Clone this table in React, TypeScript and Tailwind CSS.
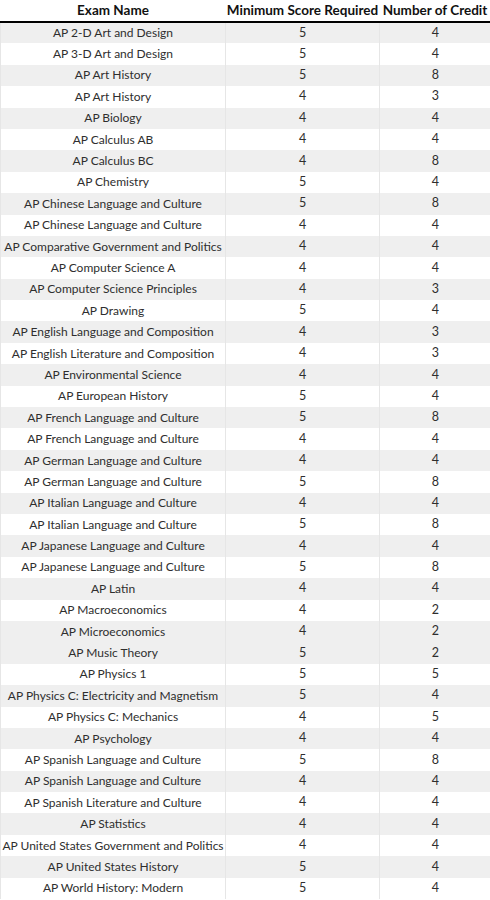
const rows: [string, number, number][] = [
  ["AP 2-D Art and Design", 5, 4],
  ["AP 3-D Art and Design", 5, 4],
  ["AP Art History", 5, 8],
  ["AP Art History", 4, 3],
  ["AP Biology", 4, 4],
  ["AP Calculus AB", 4, 4],
  ["AP Calculus BC", 4, 8],
  ["AP Chemistry", 5, 4],
  ["AP Chinese Language and Culture", 5, 8],
  ["AP Chinese Language and Culture", 4, 4],
  ["AP Comparative Government and Politics", 4, 4],
  ["AP Computer Science A", 4, 4],
  ["AP Computer Science Principles", 4, 3],
  ["AP Drawing", 5, 4],
  ["AP English Language and Composition", 4, 3],
  ["AP English Literature and Composition", 4, 3],
  ["AP Environmental Science", 4, 4],
  ["AP European History", 5, 4],
  ["AP French Language and Culture", 5, 8],
  ["AP French Language and Culture", 4, 4],
  ["AP German Language and Culture", 4, 4],
  ["AP German Language and Culture", 5, 8],
  ["AP Italian Language and Culture", 4, 4],
  ["AP Italian Language and Culture", 5, 8],
  ["AP Japanese Language and Culture", 4, 4],
  ["AP Japanese Language and Culture", 5, 8],
  ["AP Latin", 4, 4],
  ["AP Macroeconomics", 4, 2],
  ["AP Microeconomics", 4, 2],
  ["AP Music Theory", 5, 2],
  ["AP Physics 1", 5, 5],
  ["AP Physics C: Electricity and Magnetism", 5, 4],
  ["AP Physics C: Mechanics", 4, 5],
  ["AP Psychology", 4, 4],
  ["AP Spanish Language and Culture", 5, 8],
  ["AP Spanish Language and Culture", 4, 4],
  ["AP Spanish Literature and Culture", 4, 4],
  ["AP Statistics", 4, 4],
  ["AP United States Government and Politics", 4, 4],
  ["AP United States History", 5, 4],
  ["AP World History: Modern", 5, 4],
];

// stripes: first block odd rows shaded, later block even rows shaded
const shaded = (i: number) => (i < 29 ? i % 2 === 0 : i % 2 === 1);

export default function App() {
  return (
    <div className="w-[490px] h-[900px] overflow-hidden bg-white font-['Lato','Liberation_Sans',sans-serif] text-[#2e2e2e]">
      <table className="w-full border-collapse table-fixed">
        <colgroup>
          <col className="w-[225px]" />
          <col className="w-[154px]" />
          <col className="w-[111px]" />
        </colgroup>
        <thead>
          <tr className="h-[22px] border-b-2 border-black">
            <th className="text-[13.5px] font-bold text-[#111] text-center p-0 whitespace-nowrap">Exam Name</th>
            <th className="text-[13.5px] font-bold text-[#111] text-center p-0 whitespace-nowrap">Minimum Score Required</th>
            <th className="text-[13.5px] font-bold text-[#111] text-center p-0 whitespace-nowrap">Number of Credit</th>
          </tr>
        </thead>
        <tbody>
          {rows.map(([name, score, credit], i) => (
            <tr key={i} className={`h-[21.4px] ${shaded(i) ? "bg-[#efefef]" : "bg-white"}`}>
              <td className="text-[12px] text-center p-0 whitespace-nowrap border-l border-r border-[#e6e6e6]">{name}</td>
              <td className="text-[12.5px] text-center p-0 border-r border-[#e6e6e6]">{score}</td>
              <td className="text-[12.5px] text-center p-0">{credit}</td>
            </tr>
          ))}
        </tbody>
      </table>
    </div>
  );
}
